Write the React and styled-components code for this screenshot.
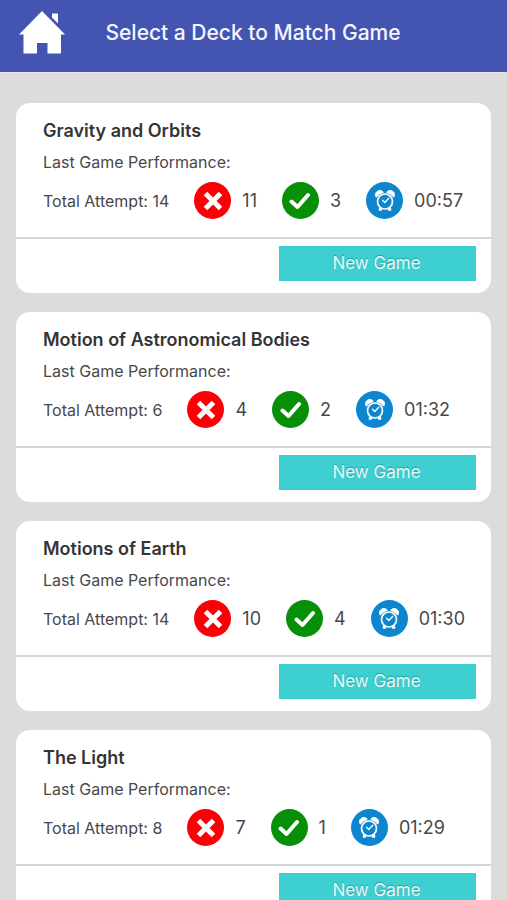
import styled, { createGlobalStyle } from "styled-components";

const decks = [
  { name: "Gravity and Orbits", attempts: 14, wrong: 11, right: 3, time: "00:57" },
  { name: "Motion of Astronomical Bodies", attempts: 6, wrong: 4, right: 2, time: "01:32" },
  { name: "Motions of Earth", attempts: 14, wrong: 10, right: 4, time: "01:30" },
  { name: "The Light", attempts: 8, wrong: 7, right: 1, time: "01:29" },
];

function HomeIcon() {
  return (
    <svg width="46" height="43" viewBox="0 0 46 43" fill="#fff" aria-hidden="true">
      <path d="M23 0 46 23.500H42V42.500H28.500V32H18V42.500H4.500V23.500H0Z" />
      <path d="M33 2.500H39V12.500L33 6.500Z" />
    </svg>
  );
}

function CrossIcon() {
  return (
    <svg width="20" height="20" viewBox="0 0 20 20" aria-hidden="true">
      <path d="M2.500 2.500 17.500 17.500M17.500 2.500 2.500 17.500" stroke="#fff" strokeWidth="5" />
    </svg>
  );
}

function CheckIcon() {
  return (
    <svg width="22" height="20" viewBox="0 0 22 20" fill="none" aria-hidden="true">
      <path
        d="M2.500 10.500 8.500 16 19 4"
        stroke="#fff"
        strokeWidth="4"
        strokeLinecap="round"
        strokeLinejoin="round"
      />
    </svg>
  );
}

function ClockIcon() {
  return (
    <svg width="20" height="22" viewBox="0 0 20 22" fill="none" aria-hidden="true">
      <path d="M1.300 7.200A4.200 4.200 0 0 1 8.300 2.300Q4 3.300 1.300 7.200Z" fill="#fff" stroke="#fff" strokeLinejoin="round" />
      <path d="M18.700 7.200A4.200 4.200 0 0 0 11.700 2.300Q16 3.300 18.700 7.200Z" fill="#fff" stroke="#fff" strokeLinejoin="round" />
      <circle cx="10" cy="11.500" r="7.500" stroke="#fff" strokeWidth="1.700" />
      <path
        d="M7.500 10.300 9.800 12.500 13.800 8.300"
        stroke="#fff"
        strokeWidth="1.300"
        strokeLinecap="round"
        strokeLinejoin="round"
      />
      <path
        d="M4.800 18 4.300 20H6.500ZM15.200 18 15.700 20H13.500Z"
        fill="#fff"
        stroke="#fff"
        strokeWidth="1.400"
        strokeLinejoin="round"
      />
    </svg>
  );
}

function DeckCard({ deck }) {
  return (
    <Card>
      <CardBody>
        <DeckName>{deck.name}</DeckName>
        <Caption>Last Game Performance:</Caption>
        <Stats>
          <Attempts>Total Attempt: {deck.attempts}</Attempts>
          <Stat>
            <Badge $color="#fb0007">
              <CrossIcon />
            </Badge>
            {deck.wrong}
          </Stat>
          <Stat>
            <Badge $color="#078f08">
              <CheckIcon />
            </Badge>
            {deck.right}
          </Stat>
          <Stat>
            <Badge $color="#0d86cf">
              <ClockIcon />
            </Badge>
            {deck.time}
          </Stat>
        </Stats>
      </CardBody>
      <CardFooter>
        <NewGameButton type="button">New Game</NewGameButton>
      </CardFooter>
    </Card>
  );
}

export default function App() {
  return (
    <>
      <GlobalStyle />
      <Header>
        <HomeLink href="#home" aria-label="Home">
          <HomeIcon />
        </HomeLink>
        <Title>Select a Deck to Match Game</Title>
      </Header>
      <DeckList>
        {decks.map((deck) => (
          <DeckCard key={deck.name} deck={deck} />
        ))}
      </DeckList>
    </>
  );
}

const GlobalStyle = createGlobalStyle`
  * {
    box-sizing: border-box;
  }
  body {
    margin: 0;
    background-color: #dcdcdc;
    color: #48484a;
    font-family: Inter, "Liberation Sans", sans-serif;
  }
`;

const Header = styled.header`
  display: grid;
  grid-template-columns: 46px 1fr 46px;
  align-items: center;
  height: 73px;
  padding: 0 20px 7px 19px;
  background-color: #4355b1;
  border-bottom: 1px solid #e6e6f0;
`;

const HomeLink = styled.a`
  display: flex;
`;

const Title = styled.h1`
  margin: 0;
  color: #f4f5ff;
  font-size: 21px;
  font-weight: 500;
  line-height: 28px;
  text-align: center;
`;

const DeckList = styled.main`
  display: flex;
  flex-direction: column;
  gap: 19px;
  padding: 30px 16px;
`;

const Card = styled.section`
  background-color: #fff;
  border-radius: 14px;
`;

const CardBody = styled.div`
  padding: 16px 27px 18px;
  border-bottom: 2px solid #d6d6d6;
`;

const DeckName = styled.h2`
  margin: 0 0 7px;
  color: #343436;
  font-size: 18px;
  font-weight: 600;
  line-height: 24px;
`;

const Caption = styled.p`
  margin: 0 0 8px;
  font-size: 16px;
  line-height: 24px;
`;

const Stats = styled.div`
  display: flex;
  align-items: center;
  gap: 25px;
`;

const Attempts = styled.span`
  font-size: 16px;
  white-space: nowrap;
`;

const Stat = styled.span`
  display: flex;
  align-items: center;
  gap: 11px;
  font-size: 18px;
`;

const Badge = styled.span`
  display: flex;
  align-items: center;
  justify-content: center;
  width: 37px;
  height: 37px;
  border-radius: 50%;
  background-color: ${({ $color }) => $color};
`;

const CardFooter = styled.div`
  display: flex;
  justify-content: flex-end;
  padding: 7px 15px 12px;
`;

const NewGameButton = styled.button`
  width: 197px;
  height: 35px;
  padding: 0 2px 2px 0;
  border: none;
  background-color: #3ecfd0;
  color: #e9fafa;
  font-family: inherit;
  font-size: 17px;
  text-shadow: 0 -1px 1px rgba(0, 60, 60, 0.35);
  cursor: pointer;
`;
